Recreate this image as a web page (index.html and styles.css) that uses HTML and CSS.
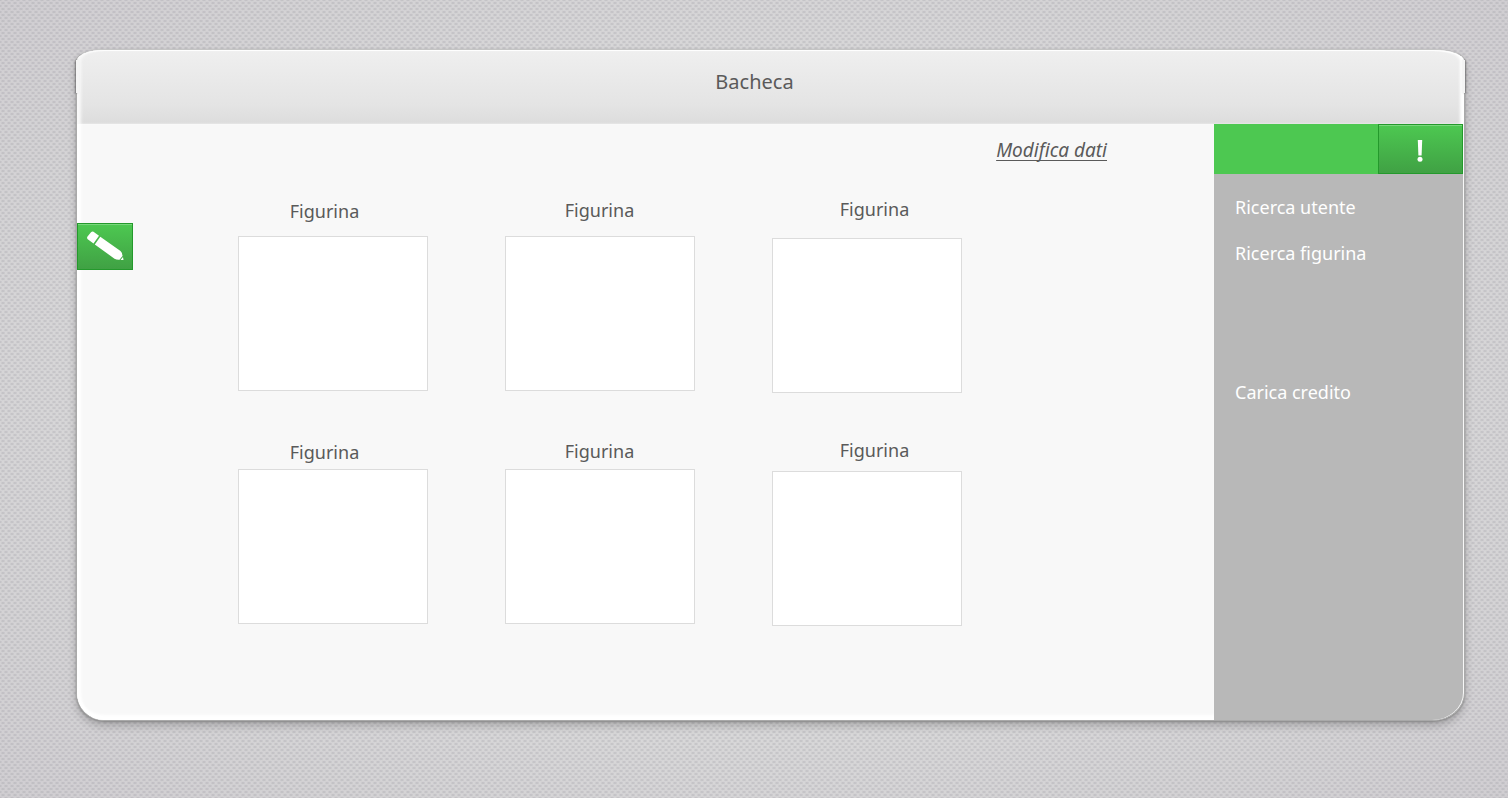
FILE: index.html
```html
<!DOCTYPE html>
<html lang="it">
<head>
<meta charset="utf-8">
<meta name="viewport" content="width=device-width, initial-scale=1">
<title>Bacheca</title>
<link rel="stylesheet" href="styles.css">
</head>
<body>
<div class="window">
  <header class="titlebar"><h1 class="title">Bacheca</h1></header>
  <div class="workspace">
    <main class="board">
      <div class="tools"><a class="edit-link" href="#modifica">Modifica dati</a></div>
      <div class="board-body">
        <button class="edit-button green-button" type="button" aria-label="Modifica">
          <svg class="pencil" viewBox="0 0 40 32" aria-hidden="true">
            <path d="M8.500 .8 L14 4.800 L8.500 12.500 L2.700 8.300 Q1.500 7 2.500 5.500 L6 1.200 Q7.300 0 8.500 .8Z M15.300 5.800 L35.500 20 Q37.500 21.700 37.500 25 L34.500 28.800 Q31.500 29 29.500 27.700 L9.800 13.500 Z M38 26 L38.500 29 L35.500 29 Z" fill="#fff"/>
          </svg>
        </button>
        <div class="cards">
          <figure class="card card-first"><figcaption class="caption">Figurina</figcaption><div class="frame"></div></figure>
          <figure class="card card-mid"><figcaption class="caption">Figurina</figcaption><div class="frame"></div></figure>
          <figure class="card card-last"><figcaption class="caption">Figurina</figcaption><div class="frame"></div></figure>
          <figure class="card card-first card-tight"><figcaption class="caption">Figurina</figcaption><div class="frame"></div></figure>
          <figure class="card card-mid card-tight"><figcaption class="caption">Figurina</figcaption><div class="frame"></div></figure>
          <figure class="card card-last card-tight"><figcaption class="caption">Figurina</figcaption><div class="frame"></div></figure>
        </div>
      </div>
    </main>
    <aside class="sidebar">
      <div class="alert-bar"><button class="alert-button green-button" type="button" aria-label="Avvisi">
        <svg class="alert-mark" viewBox="0 0 6 22" aria-hidden="true"><path d="M.8 0H5.200L4.600 15.500H1.400Z" fill="#fff"/><circle cx="3" cy="19.300" r="2.500" fill="#fff"/></svg>
      </button></div>
      <nav class="menu">
        <a class="menu-link" href="#utente">Ricerca utente</a>
        <a class="menu-link" href="#figurina">Ricerca figurina</a>
        <a class="menu-link menu-credit" href="#credito">Carica credito</a>
      </nav>
    </aside>
  </div>
</div>
</body>
</html>
```
FILE: styles.css
```css
* { box-sizing: border-box; }

body {
  margin: 0;
  min-height: 100vh;
  padding: 49px 43px 77px 76px;
  display: flex;
  flex-direction: column;
  font-family: "Noto Sans", "Open Sans", sans-serif;
  font-size: 18px;
  line-height: 24px;
  color: #5a5a5a;
  background:
    radial-gradient(ellipse 3px 2px, rgba(140, 138, 148, .38), transparent) 0 0 / 6px 6px,
    radial-gradient(ellipse 3px 2px, rgba(140, 138, 148, .38), transparent) 3px 3px / 6px 6px,
    radial-gradient(ellipse at center, #e6e6e6 0%, #dddddd 55%, #d4d2d5 100%);
}

.window {
  flex: 1;
  display: flex;
  flex-direction: column;
  border: 1px solid #a9a9a9;
  border-top-color: #c4c4c4;
  border-radius: 28px 32px 32px 28px / 12px 12px 28px 28px;
  background: #f8f8f8;
  box-shadow: 0 1px 2px #888, 0 5px 8px rgba(0, 0, 0, .2);
}

.titlebar {
  position: relative;
  height: 74px;
  padding-top: 20px;
  border-radius: 27px 31px 0 0 / 11px 11px 0 0;
  background: linear-gradient(#efefef, #e4e4e4 75%, #dcdcdc);
  box-shadow: inset 5px 0 3px -1px #f9f9f9, inset -5px 0 3px -1px #fff, inset 0 2px 1px -1px #fff;
}

/* Raised lips at both sides of the title bar */
.titlebar::before,
.titlebar::after {
  content: "";
  position: absolute;
  top: 10px;
  bottom: 31px;
  width: 3px;
  background: #f4f4f4;
}
.titlebar::before { left: -1px; box-shadow: -1px 0 2px rgba(0, 0, 0, .3); }
.titlebar::after { right: -1px; box-shadow: 1px 0 2px rgba(0, 0, 0, .3); }

.title {
  margin: 0;
  padding-right: 32px;
  font-size: 20px;
  font-weight: 400;
  text-align: center;
}

.workspace { flex: 1; display: flex; }

.board {
  flex: 1;
  border-bottom-left-radius: 27px;
  box-shadow: inset 5px 0 3px -1px #fff, inset 0 -6px 3px -1px #fff;
}

.tools {
  padding: 14px 107px 0 0;
  text-align: right;
}

.edit-link {
  color: inherit;
  font-size: 19px;
  font-style: italic;
  text-underline-offset: 3px;
  text-decoration-thickness: 1px;
  text-decoration-skip-ink: none;
}

.board-body { display: flex; align-items: flex-start; }

.green-button {
  display: flex;
  align-items: center;
  justify-content: center;
  padding: 0;
  border: 1px solid #24992c;
  background: linear-gradient(#4dc851, #40a144);
  box-shadow: inset 0 1px #79d77c;
}

.edit-button { width: 56px; height: 47px; margin-top: 61px; }
.pencil { width: 40px; height: 32px; }

.cards {
  flex: 1;
  display: grid;
  grid-template-columns: repeat(3, 190px);
  column-gap: 77px;
  row-gap: 45px;
  padding: 35px 0 0 105px;
}

.card {
  display: flex;
  flex-direction: column;
  gap: 14px;
  margin: 0;
}
.card-first { gap: 13px; padding-top: 2px; }
.card-mid { padding-top: 1px; }
.card-last { gap: 17px; }
.card-tight { gap: 6px; }
.card-first.card-tight { gap: 5px; }
.card-last.card-tight { gap: 9px; }

.caption { text-align: center; }
.card-first .caption { padding-right: 17px; }
.card-mid .caption { padding-right: 1px; }
.card-last .caption { padding-left: 15px; }

.frame { height: 155px; border: 1px solid #dcdcdc; background: #fff; }

.sidebar {
  width: 249px;
  margin-right: 1px;
  border-bottom-right-radius: 31px 27px;
  background: #b8b8b8;
}

.alert-bar { display: flex; justify-content: flex-end; background: #4dc851; }
.alert-button { width: 85px; height: 50px; padding: 4px 2px 0 0; }
.alert-mark { width: 6px; height: 22px; }

.menu {
  display: flex;
  flex-direction: column;
  align-items: flex-start;
  gap: 22px;
  padding: 21px;
}

.menu-link { color: #fff; text-decoration: none; }
.menu-credit { margin-top: 93px; }
```
